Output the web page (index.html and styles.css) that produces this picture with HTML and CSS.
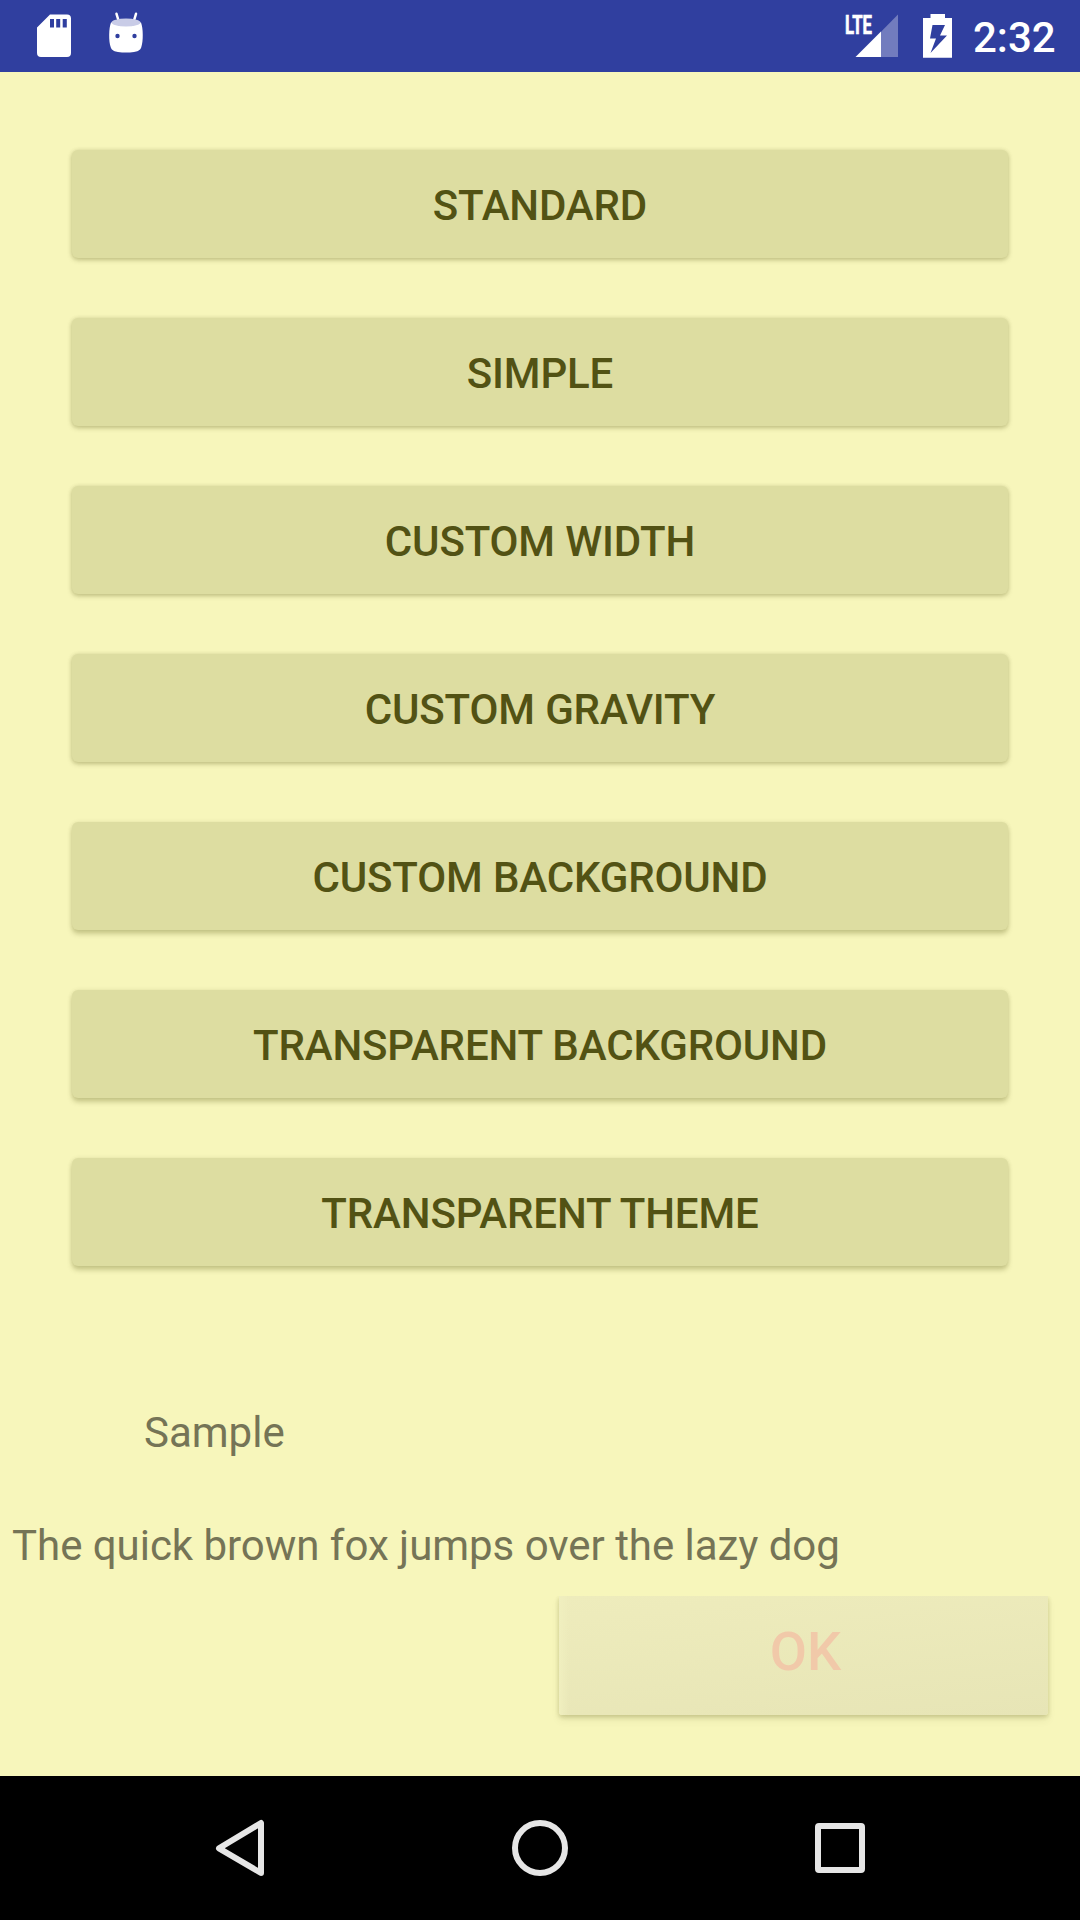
FILE: index.html
```html
<!DOCTYPE html>
<html lang="en">
<head>
<meta charset="utf-8">
<title>Dialog samples</title>
<link rel="stylesheet" href="styles.css">
</head>
<body>
<div class="screen">
  <header class="status-bar">
    <svg class="notifications" width="160" height="72" viewBox="0 0 160 72">
      <path fill="#fff" fill-rule="evenodd" d="M50 14.5H67Q71 14.5 71 18.5V53Q71 57 67 57H41Q37 57 37 53V27.5ZM50 19V27.5H54V19ZM56.2 19V27.5H60.2V19ZM62.7 19V27.5H66.8V19Z"/>
      <path d="M116.5 13.8L118.8 21.5M136 13.8L133.7 21.5" stroke="#fff" stroke-width="2.5" stroke-linecap="round"/>
      <path fill="#fff" d="M111 22.5C108.8 28 108.5 41 110.8 47.5C111.8 50.5 115 51.5 118 52Q126 53.2 134 52C137 51.5 140.2 50.5 141.2 47.5C143.5 41 143.2 28 141 22.5Z"/>
      <ellipse cx="126" cy="22.5" rx="14.5" ry="4" fill="#c9cce7"/>
      <circle cx="117.5" cy="36" r="2.2" fill="#303f9f"/>
      <circle cx="134.5" cy="36" r="2.2" fill="#303f9f"/>
    </svg>
    <div class="system">
      <svg width="120" height="72" viewBox="840 0 120 72">
        <text class="lte" x="845" y="33.5" textLength="27" lengthAdjust="spacingAndGlyphs">LTE</text>
        <path fill="#fff" fill-opacity=".32" d="M881 31.7L898 14.5V57H881Z"/>
        <path fill="#fff" d="M855.5 57L881 31.5V57Z"/>
        <path fill="#fff" fill-rule="evenodd" d="M930.5 14H945V18H952V57.7H923V18H930.5ZM932.5 25L930 38.5H936L930.5 53L947 35.5H940L945 25Z"/>
      </svg>
      <span class="clock">2:32</span>
    </div>
  </header>
  <main class="content">
    <div class="actions">
      <button class="action">STANDARD</button>
      <button class="action">SIMPLE</button>
      <button class="action">CUSTOM WIDTH</button>
      <button class="action">CUSTOM GRAVITY</button>
      <button class="action low">CUSTOM BACKGROUND</button>
      <button class="action low">TRANSPARENT BACKGROUND</button>
      <button class="action low">TRANSPARENT THEME</button>
    </div>
    <p class="title">Sample</p>
    <p class="message">The quick brown fox jumps over the lazy dog</p>
    <div class="confirm-row"><button class="confirm">OK</button></div>
  </main>
  <nav class="nav-bar">
    <svg width="1080" height="144" viewBox="0 1776 1080 144" fill="none" stroke="#e6e6e6" stroke-width="6" stroke-linejoin="round">
      <path d="M261 1823V1873L219 1848.3Z"/>
      <circle cx="540" cy="1848" r="25"/>
      <rect x="818" y="1826" width="44" height="44" rx="1"/>
    </svg>
  </nav>
</div>
</body>
</html>
```
FILE: styles.css
```css
* { box-sizing: border-box; }
body { margin: 0; font-family: Roboto, "Noto Sans", sans-serif; }
p { margin: 0; }
button { border: 0; margin: 0; padding: 0; font-family: inherit; font-weight: 500; }
svg { display: block; }

.screen {
  width: 1080px;
  height: 1920px;
  display: flex;
  flex-direction: column;
  background: #f7f6bb;
}

.status-bar {
  height: 72px;
  display: flex;
  justify-content: space-between;
  background: #303f9f;
}
.system { display: flex; }
.lte { font-size: 26px; font-weight: 700; fill: #fff; stroke: #fff; stroke-width: .7px; }
.clock {
  width: 120px;
  padding-left: 13px;
  font-size: 42px;
  font-weight: 500;
  line-height: 76px;
  color: #fff;
}

.content { flex: 1; }
.actions {
  display: flex;
  flex-direction: column;
  gap: 60px;
  padding: 78px 72px 0;
}
.action {
  height: 108px;
  padding-top: 2px;
  border-radius: 6px;
  background: #dddda1;
  box-shadow: 0 2px 5px rgba(70, 70, 0, .28), 0 0 4px rgba(70, 70, 0, .1);
  color: #525214;
  font-size: 42px;
  letter-spacing: -.14px;
}
.action.low {
  box-shadow: 0 4px 5px rgba(70, 70, 0, .25), 0 0 4px rgba(70, 70, 0, .1);
}
.title, .message {
  font-size: 42px;
  line-height: 50px;
  color: #757456;
}
.title { margin: 142px 0 0 144px; }
.message { margin: 63px 0 0 12px; letter-spacing: -.03px; }
.confirm-row {
  display: flex;
  justify-content: flex-end;
  margin-top: 25px;
  padding: 0 32px 30px 0;
  overflow: hidden;
}
.confirm {
  width: 489px;
  height: 119px;
  padding: 0 0 8px 4px;
  border-radius: 0 0 3px 3px;
  background:
    linear-gradient(90deg, #f0efbf, transparent 10px),
    linear-gradient(174deg, #eeecbc, #e7e5b6);
  box-shadow: 0 2px 4px rgba(70, 70, 0, .22), 0 5px 9px rgba(70, 70, 0, .08);
  color: #f1c9a9;
  font-size: 54px;
}

.nav-bar { height: 144px; background: #000; }
```
